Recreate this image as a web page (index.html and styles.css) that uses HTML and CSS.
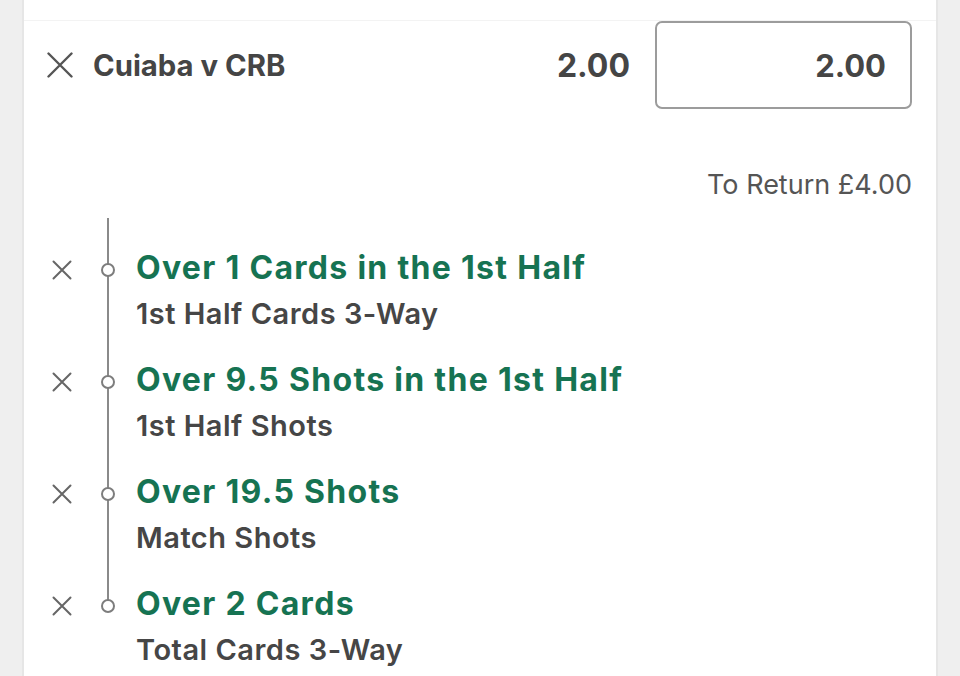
FILE: index.html
```html
<!DOCTYPE html>
<html lang="en">
<head>
<meta charset="utf-8">
<title>Bet slip</title>
<link rel="stylesheet" href="styles.css">
</head>
<body>
<div class="page">
  <div class="gutter gutter-left"></div>
  <main class="card">
    <div class="top-band"></div>
    <div class="selection">
      <button class="remove remove-lg" aria-label="Remove">
        <svg width="26" height="26" viewBox="0 0 26 26"><path d="M1.5 1.5 L24.5 24.5 M24.5 1.5 L1.5 24.5" stroke="#555" stroke-width="2.4" stroke-linecap="round" fill="none"/></svg>
      </button>
      <div class="match">Cuiaba v CRB</div>
      <div class="odds">2.00</div>
      <div class="stake">2.00</div>
    </div>
    <div class="return">To Return £4.00</div>
    <ul class="legs">
      <li class="leg">
        <span class="remove remove-sm"><svg width="20" height="20" viewBox="0 0 20 20"><path d="M1.5 1.5 L18.5 18.5 M18.5 1.5 L1.5 18.5" stroke="#666" stroke-width="2" stroke-linecap="round" fill="none"/></svg></span>
        <span class="track"><span class="node"></span></span>
        <div class="leg-text">
          <div class="leg-title">Over 1 Cards in the 1st Half</div>
          <div class="leg-market">1st Half Cards 3-Way</div>
        </div>
      </li>
      <li class="leg">
        <span class="remove remove-sm"><svg width="20" height="20" viewBox="0 0 20 20"><path d="M1.5 1.5 L18.5 18.5 M18.5 1.5 L1.5 18.5" stroke="#666" stroke-width="2" stroke-linecap="round" fill="none"/></svg></span>
        <span class="track"><span class="node"></span></span>
        <div class="leg-text">
          <div class="leg-title">Over 9.5 Shots in the 1st Half</div>
          <div class="leg-market">1st Half Shots</div>
        </div>
      </li>
      <li class="leg">
        <span class="remove remove-sm"><svg width="20" height="20" viewBox="0 0 20 20"><path d="M1.5 1.5 L18.5 18.5 M18.5 1.5 L1.5 18.5" stroke="#666" stroke-width="2" stroke-linecap="round" fill="none"/></svg></span>
        <span class="track"><span class="node"></span></span>
        <div class="leg-text">
          <div class="leg-title">Over 19.5 Shots</div>
          <div class="leg-market">Match Shots</div>
        </div>
      </li>
      <li class="leg leg-last">
        <span class="remove remove-sm"><svg width="20" height="20" viewBox="0 0 20 20"><path d="M1.5 1.5 L18.5 18.5 M18.5 1.5 L1.5 18.5" stroke="#666" stroke-width="2" stroke-linecap="round" fill="none"/></svg></span>
        <span class="track"><span class="node"></span></span>
        <div class="leg-text">
          <div class="leg-title">Over 2 Cards</div>
          <div class="leg-market">Total Cards 3-Way</div>
        </div>
      </li>
    </ul>
  </main>
  <div class="gutter gutter-right"></div>
</div>
</body>
</html>
```
FILE: styles.css
```css
* { box-sizing: border-box; }
html, body {
  margin: 0;
  padding: 0;
  height: 676px;
  overflow: hidden;
  background: #efefef;
  font-family: Inter, "Noto Sans", "Liberation Sans", sans-serif;
  color: #464646;
}
.page {
  display: flex;
  height: 676px;
}
.gutter {
  width: 24px;
  flex: none;
  background: #efefef;
}
.gutter-left { border-right: 2px solid #e6e6e6; }
.gutter-right { border-left: 2px solid #e6e6e6; }
.card {
  flex: 1;
  background: #fff;
  display: flex;
  flex-direction: column;
}
.top-band {
  height: 21px;
  border-bottom: 1px solid #f3f3f3;
  flex: none;
}
.selection {
  display: flex;
  align-items: center;
  padding: 0 24px 0 23px;
  height: 88px;
}
.remove {
  display: flex;
  align-items: center;
  justify-content: center;
  border: 0;
  background: none;
  padding: 0;
}
.remove-lg {
  width: 26px;
  height: 26px;
}
.match {
  margin-left: 20px;
  font-size: 29.3px;
  font-weight: 700;
  color: #454545;
}
.odds {
  margin-left: auto;
  font-size: 32px;
  font-weight: 700;
  color: #454545;
}
.stake {
  margin-left: 25px;
  width: 257px;
  height: 88px;
  border: 2px solid #9c9c9c;
  border-radius: 7px;
  display: flex;
  align-items: center;
  justify-content: flex-end;
  padding-right: 24px;
  font-size: 31px;
  font-weight: 700;
  color: #454545;
}
.return {
  text-align: right;
  padding-right: 24px;
  margin-top: 63px;
  font-size: 27px;
  line-height: 26px;
  color: #555;
}
.legs {
  list-style: none;
  margin: 20px 0 0 0;
  padding: 0 0 0 28px;
}
.leg {
  display: grid;
  grid-template-columns: 20px 24px 24px 1fr;
  height: 112px;
}
.leg .remove-sm {
  grid-column: 1;
  align-self: start;
  margin-top: 42px;
  width: 20px;
  height: 20px;
}
.track {
  grid-column: 3;
  display: flex;
  justify-content: center;
  align-items: flex-start;
  background: linear-gradient(#8a8a8a, #8a8a8a) center top / 2px 100% no-repeat;
}
.leg-last .track {
  background-size: 2px 46px;
}
.node {
  margin-top: 45px;
  width: 14px;
  height: 14px;
  border-radius: 50%;
  border: 2px solid #7d7d7d;
  background: #fff;
}
.leg-text {
  grid-column: 4;
  padding-left: 16px;
  padding-top: 32px;
  white-space: nowrap;
}
.leg-title {
  font-size: 32px;
  line-height: 36px;
  font-weight: 700;
  color: #167352;
  letter-spacing: 1.3px;
}
.leg-market {
  margin-top: 12px;
  font-size: 29px;
  line-height: 32px;
  font-weight: 600;
  color: #464646;
  letter-spacing: 0.5px;
}
```
